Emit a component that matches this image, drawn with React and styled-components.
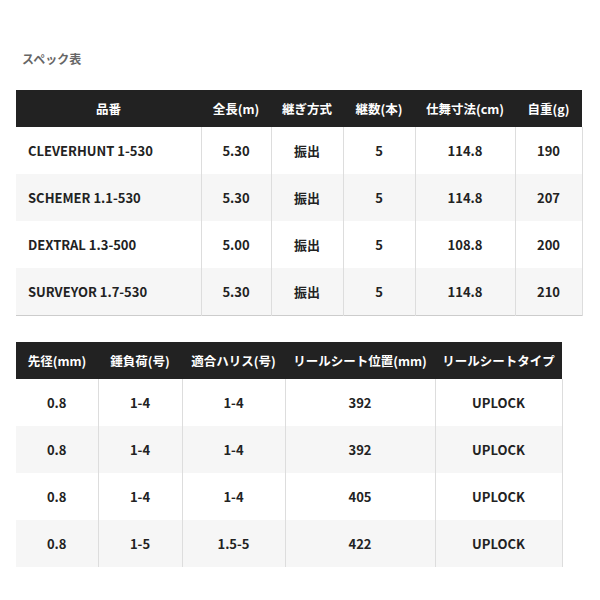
import React from "react";
import styled, { createGlobalStyle } from "styled-components";

const Global = createGlobalStyle`
  body { margin: 0; background: #fff; font-family: "Noto Sans CJK JP", "Noto Sans", sans-serif; }
`;
const Page = styled.div`padding: 50px 16px 0;`;
const Title = styled.div`font-size: 12px; font-weight: 700; color: #666; margin-left: 6px; height: 40px;`;
const Table = styled.table`
  border-collapse: collapse; table-layout: fixed; width: ${p => p.$w}px;
  margin-bottom: ${p => p.$mb || 0}px;
  border-bottom: ${p => p.$bb ? "1px solid #ccc" : "none"};
  font-size: 13px; font-weight: 700; color: #222;
`;
const Th = styled.th`
  background: #222; color: #fff; height: 37px; padding: 0; font-weight: 700; font-size: 12.5px;
`;
const Tr = styled.tr`background: ${p => p.$alt ? "#f6f6f6" : "#fff"};`;
const Td = styled.td`
  height: 47px; padding: 0 ${p => p.$left ? "12px" : "0"}; text-align: ${p => p.$left ? "left" : "center"};
  border-left: 1px solid #ddd; border-right: 1px solid #ddd;
  &:first-child { border-left: none; }
`;

const t1 = { w: [185, 70, 72, 72, 100, 67], h: ["品番", "全長(m)", "継ぎ方式", "継数(本)", "仕舞寸法(cm)", "自重(g)"],
  rows: [["CLEVERHUNT 1-530","5.30","振出","5","114.8","190"],["SCHEMER 1.1-530","5.30","振出","5","114.8","207"],["DEXTRAL 1.3-500","5.00","振出","5","108.8","200"],["SURVEYOR 1.7-530","5.30","振出","5","114.8","210"]] };
const t2 = { w: [82, 84, 103, 150, 127], h: ["先径(mm)", "錘負荷(号)", "適合ハリス(号)", "リールシート位置(mm)", "リールシートタイプ"],
  rows: [["0.8","1-4","1-4","392","UPLOCK"],["0.8","1-4","1-4","392","UPLOCK"],["0.8","1-4","1-4","405","UPLOCK"],["0.8","1-5","1.5-5","422","UPLOCK"]] };

const Spec = ({ t, mb, bb, left }) => (
  <Table $w={t.w.reduce((a, b) => a + b, 0)} $mb={mb} $bb={bb}>
    <colgroup>{t.w.map((w, i) => <col key={i} style={{ width: w }} />)}</colgroup>
    <thead><tr>{t.h.map(h => <Th key={h}>{h}</Th>)}</tr></thead>
    <tbody>{t.rows.map((r, i) => (
      <Tr key={i} $alt={i % 2 === 1}>{r.map((c, j) => <Td key={j} $left={left && j === 0}>{c}</Td>)}</Tr>
    ))}</tbody>
  </Table>
);

export default function App() {
  return (<><Global /><Page>
    <Title>スペック表</Title>
    <Spec t={t1} mb={26} bb left />
    <Spec t={t2} />
  </Page></>);
}
